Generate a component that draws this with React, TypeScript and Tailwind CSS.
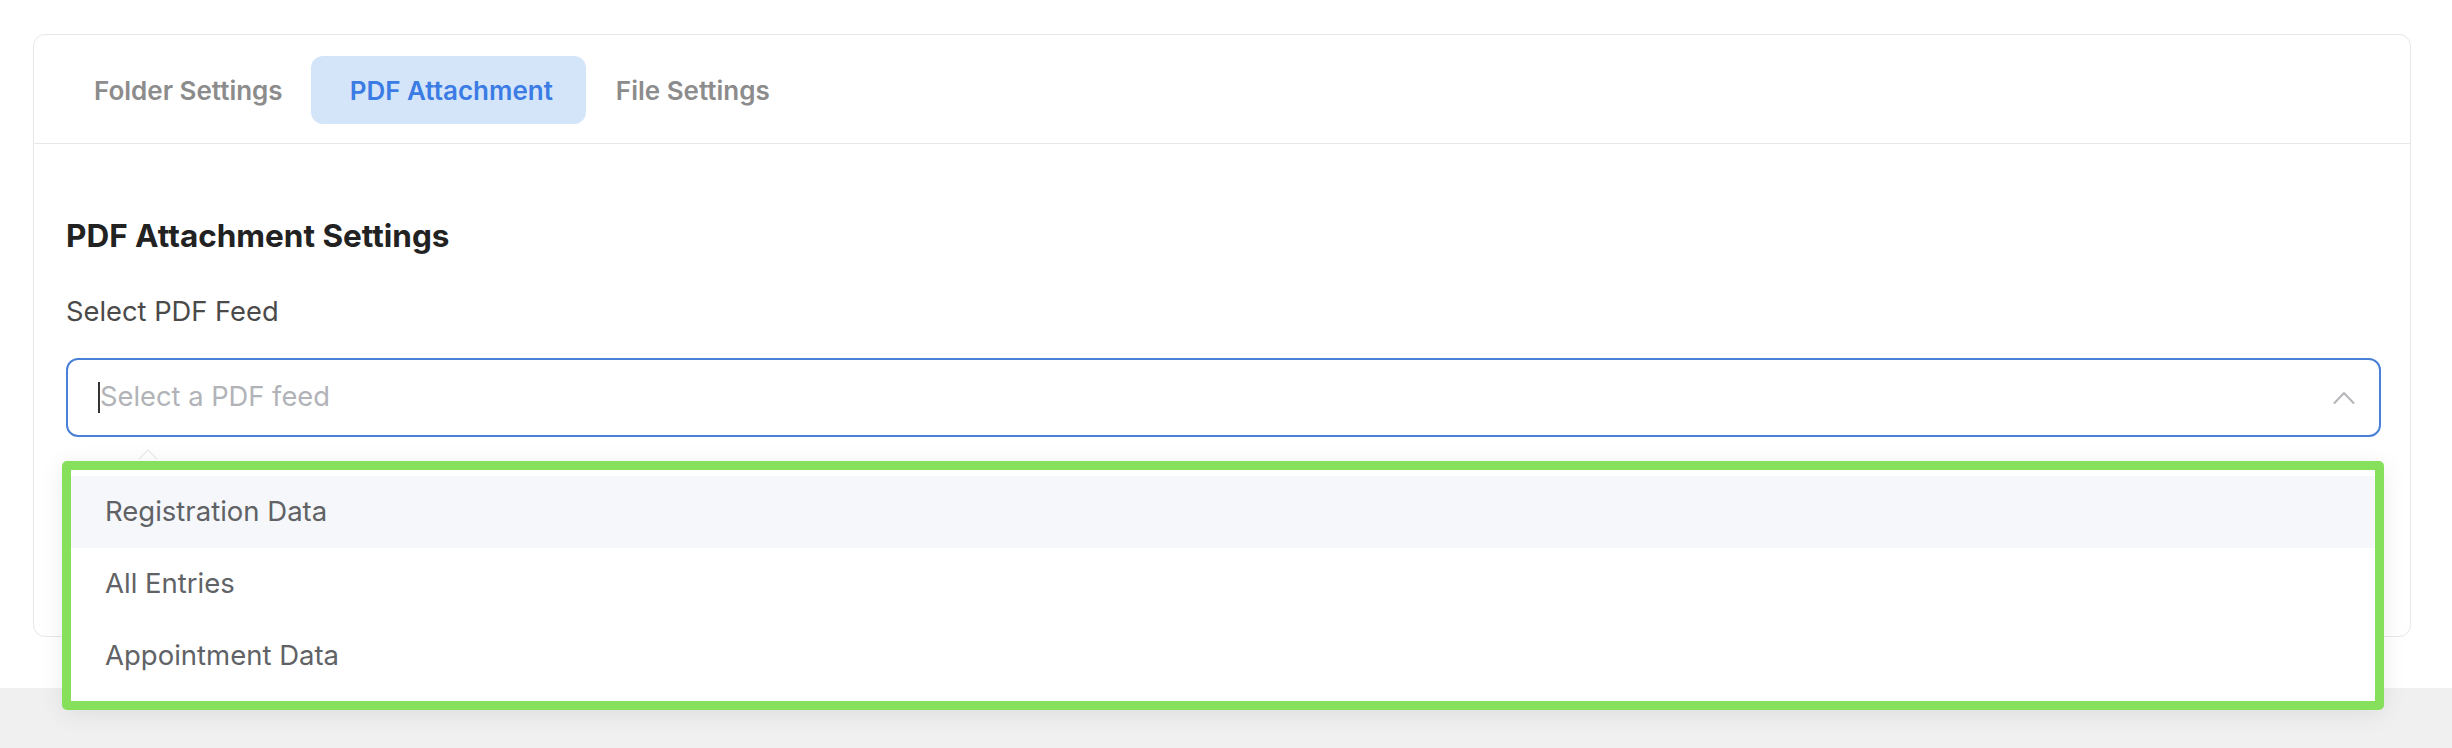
import React from "react";

const options = ["Registration Data", "All Entries", "Appointment Data"];

export default function App() {
  return (
    <div className="flex h-[748px] w-full flex-col font-['Inter','Noto_Sans',sans-serif]">
      <div className="h-[688px] bg-white pt-[34px]">
        <div className="ml-[33px] mr-[41px] h-[603px] rounded-[12px] border-[1.5px] border-[#e6e6e6] bg-white">
          {/* Tabs */}
          <div className="flex items-center border-b-[1.5px] border-[#e8e8e8] pb-[19px] pl-[25px] pt-[21px]">
            <div className="flex h-[68px] items-center pl-[35px] pr-[28px] text-[26px] font-semibold text-[#8c8c8c]">
              Folder Settings
            </div>
            <div className="flex h-[68px] items-center rounded-[12px] bg-[#d4e5fa] pl-[39px] pr-[33px] text-[26px] font-semibold text-[#3b7be4]">
              PDF Attachment
            </div>
            <div className="flex h-[68px] items-center pl-[30px] pr-[35px] text-[26px] font-semibold text-[#8c8c8c]">
              File Settings
            </div>
          </div>

          {/* Content */}
          <div className="pl-[32px] pr-[29px] pt-[74px]">
            <h2 className="text-[31.5px] font-bold leading-[36px] text-[#222222]">
              PDF Attachment Settings
            </h2>
            <div className="mt-[40px] text-[27.3px] leading-[36px] text-[#4a4a4a]">
              Select PDF Feed
            </div>
            <div className="relative mt-[28px]">
              <div className="flex h-[79px] items-center rounded-[12px] border-2 border-[#4b80d8] pl-[30px] pr-[24px]">
                <span className="h-[31px] w-[2px] bg-[#333333]" />
                <span className="flex-1 text-[27.3px] text-[#b1b3b8]">Select a PDF feed</span>
                <svg width="22" height="13" viewBox="0 0 22 13" fill="none">
                  <polyline
                    points="1.5,12 11,2 20.5,12"
                    stroke="#b4b6bb"
                    strokeWidth="2"
                    strokeLinecap="round"
                    strokeLinejoin="round"
                  />
                </svg>
              </div>

              {/* popper arrow */}
              <div className="absolute left-[72px] top-[calc(100%+12px)] h-0 w-0 border-x-[10px] border-b-[10px] border-x-transparent border-b-[#ececec]" />
              <div className="absolute left-[74px] top-[calc(100%+14px)] h-0 w-0 border-x-[8px] border-b-[8px] border-x-transparent border-b-white" />

              {/* Dropdown */}
              <div className="absolute left-[-4px] right-[-3px] top-[calc(100%+24px)] rounded-[5px] border-[9px] border-[#86e05c] bg-white pb-[9px] pt-[6px] shadow-[0_4px_24px_rgba(0,0,0,0.08)]">
                {options.map((o, i) => (
                  <div
                    key={o}
                    className={
                      i === 0
                        ? "flex h-[72px] items-center bg-[#f5f7fa] pl-[34px] text-[27.5px] text-[#606266]"
                        : "flex h-[72px] items-center pl-[34px] text-[27.5px] text-[#606266]"
                    }
                  >
                    {o}
                  </div>
                ))}
              </div>
            </div>
          </div>
        </div>
      </div>
      <div className="flex-1 bg-[#f0f0f1]" />
    </div>
  );
}
